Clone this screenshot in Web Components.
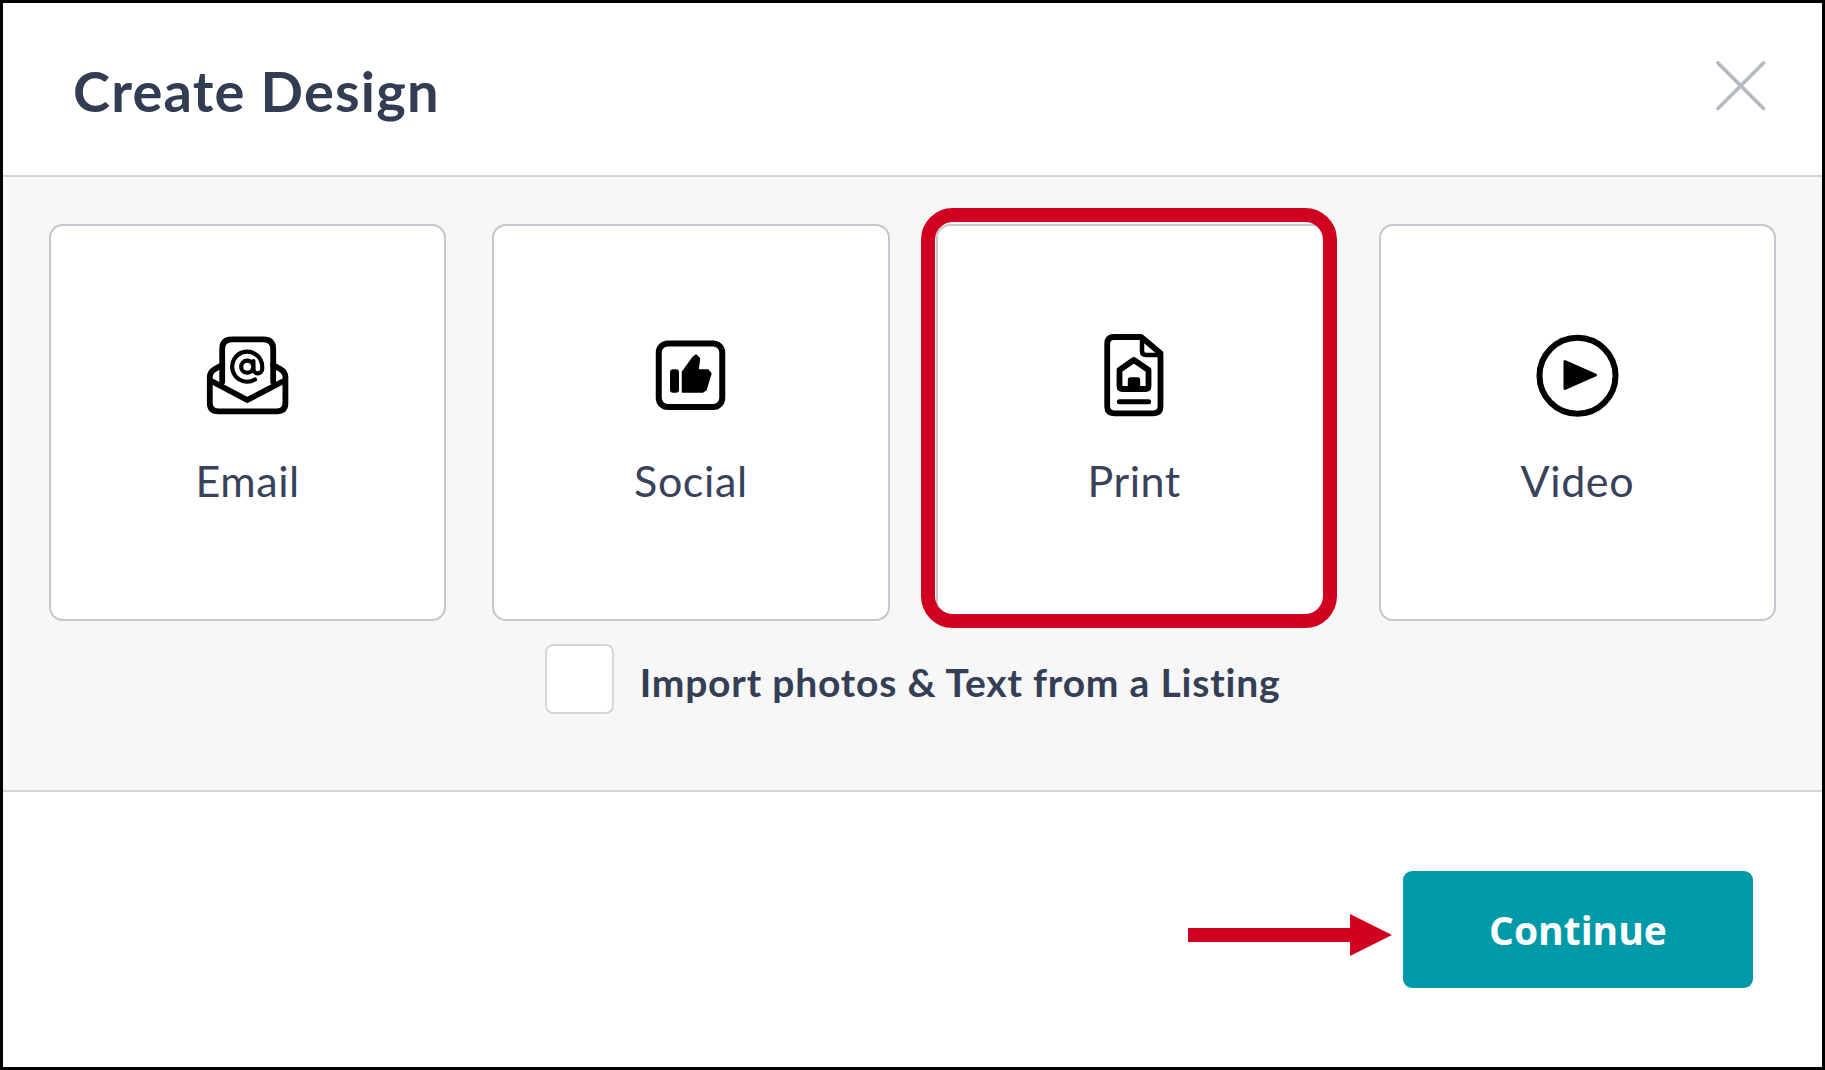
<!DOCTYPE html>
<html lang="en">
<head>
<meta charset="utf-8">
<title>Create Design</title>
<style>
  html, body { margin: 0; background: #fff; }
  body { font-family: Lato, "Open Sans", sans-serif; color: #2f3a50; }
</style>
</head>
<body>
<design-dialog>
  <span slot="title">Create Design</span>

  <design-card label="Email" slot="cards">
    <svg viewBox="0 0 96 96" fill="none" stroke="#000" stroke-width="5.800" stroke-linejoin="round" stroke-linecap="round">
      <path d="M22.200 54.700V22q0-9.700 9.700-9.700h31.600q9.700 0 9.700 9.700v32.700"/>
      <path d="M22.200 38L15 42q-5.200 3-5.200 8v26q0 8.300 8.300 8.300h59q8.300 0 8.300-8.300V50q0-5-5.200-8l-7.200-4"/>
      <path d="M12.800 54.700L47.200 73l35-18.300"/>
      <g stroke-width="4.200">
        <circle cx="47.200" cy="39.700" r="6"/>
        <path d="M53.400 34v8a4.400 4.400 0 0 0 8.800 0v-2.300A15 15 0 1 0 55 52.500"/>
      </g>
    </svg>
  </design-card>

  <design-card label="Social" slot="cards">
    <svg viewBox="0 0 96 96" fill="none" stroke="#000" stroke-width="6">
      <rect x="15.750" y="16.500" width="63.500" height="63.500" rx="9"/>
      <rect x="27" y="42.300" width="9" height="23.400" rx="3" fill="#000" stroke="none"/>
      <path fill="#000" stroke="#000" stroke-width="1.500" stroke-linejoin="round" d="M39.500 45L50.300 30l2.700-2 3.500 3.500-1.500 11.500h10l2.900 3.500-5 16.500-3 2H39.500z"/>
    </svg>
  </design-card>

  <design-card label="Print" slot="cards">
    <svg viewBox="0 0 96 96" fill="none" stroke="#000" stroke-width="5.800" stroke-linejoin="round" stroke-linecap="round">
      <path d="M55.200 10H28.200q-7 0-7 7v62.300q0 7 7 7h39.300q7 0 7-7V26.300z"/>
      <path d="M56 11v13q0 4 4 4h14" stroke-width="4.500"/>
      <path d="M47.800 33l14.700 10v16q0 3-3 3h-23q-3 0-3-3V43z"/>
      <path d="M41.800 62V53q0-2.700 2.700-2.700h7q2.700 0 2.700 2.700v9z" fill="#000" stroke="none"/>
      <path d="M33.400 74.700h29.200" stroke-width="5"/>
    </svg>
    <red-frame slot="overlay"></red-frame>
  </design-card>

  <design-card label="Video" slot="cards">
    <svg viewBox="0 0 96 96" fill="none" stroke="#000" stroke-width="6">
      <circle cx="48.500" cy="48.700" r="38"/>
      <path fill="#000" stroke="#000" stroke-width="3" stroke-linejoin="round" d="M36 34.500L66.500 48 36 61.500z"/>
    </svg>
  </design-card>

  <import-option slot="option">Import photos &amp; Text from a Listing</import-option>

  <red-arrow slot="footer"></red-arrow>
  <teal-button slot="footer">Continue</teal-button>
</design-dialog>

<script>
customElements.define('design-dialog',
  class extends HTMLElement {
    constructor () {
      super()
      this.attachShadow({ mode: 'open' }).innerHTML = `
        <style>
          :host { display: flex; flex-direction: column; box-sizing: border-box; height: 1070px; border: 3px solid #000; background: #fff; overflow: hidden; }
          header { display: flex; justify-content: space-between; align-items: flex-start; height: 174px; padding: 0 54px 0 70px; box-sizing: border-box; border-bottom: 2px solid #d3d5d9; }
          h1 { margin: 56px 0 0; font-size: 56px; line-height: 64px; font-weight: 700; letter-spacing: 1.2px; color: #323c52; }
          svg { width: 56px; height: 56px; margin-top: 55px; }
          main { background: #f7f7f7; height: 615px; box-sizing: border-box; padding: 47px 46px 0; border-bottom: 2px solid #d3d5d9; }
          .cards { display: grid; grid-template-columns: repeat(4, 1fr); gap: 46px; }
          .option { display: flex; justify-content: center; margin-top: 23px; }
          footer { flex: 1; display: flex; justify-content: flex-end; align-items: flex-start; gap: 11px; padding: 79px 69px 0 0; }
        </style>
        <header>
          <h1><slot name="title"></slot></h1>
          <svg viewBox="0 0 56 56" fill="none" stroke="#b5b9c1" stroke-width="3.800" stroke-linecap="round"><path d="M6 5l45.500 45.500M51.500 5L6 50.500"/></svg>
        </header>
        <main>
          <div class="cards"><slot name="cards"></slot></div>
          <div class="option"><slot name="option"></slot></div>
        </main>
        <footer><slot name="footer"></slot></footer>
      `
    }
  }
)

customElements.define('design-card',
  class extends HTMLElement {
    constructor () {
      super()
      this.attachShadow({ mode: 'open' }).innerHTML = `
        <style>
          :host { display: flex; flex-direction: column; align-items: center; position: relative; box-sizing: border-box; height: 397px; background: #fff; border: 2px solid #c4c7cd; border-radius: 14px; padding-top: 101px; }
          .icon { display: block; width: 96px; height: 96px; }
          ::slotted(svg) { display: block; width: 96px; height: 96px; }
          .label { margin-top: 34px; font-size: 43px; line-height: 48px; letter-spacing: 0.6px; color: #38425a; }
        </style>
        <div class="icon"><slot></slot></div>
        <div class="label"></div>
        <slot name="overlay"></slot>
      `
      this.shadowRoot.querySelector('.label').textContent = this.getAttribute('label')
    }
  }
)

customElements.define('red-frame',
  class extends HTMLElement {
    constructor () {
      super()
      this.attachShadow({ mode: 'open' }).innerHTML = `
        <style>
          :host { position: absolute; left: -17px; top: -18px; width: 416px; height: 420px; box-sizing: border-box; border: 14px solid #cf0020; border-radius: 32px; }
        </style>
      `
    }
  }
)

customElements.define('import-option',
  class extends HTMLElement {
    constructor () {
      super()
      this.attachShadow({ mode: 'open' }).innerHTML = `
        <style>
          :host { display: flex; align-items: center; gap: 26px; }
          .box { width: 69px; height: 70px; box-sizing: border-box; background: #fff; border: 2px solid #d5d7db; border-radius: 8px; }
          .text { margin-top: 6px; font-size: 39px; line-height: 46px; font-weight: 700; letter-spacing: 0.8px; color: #343e54; }
        </style>
        <span class="box"></span>
        <span class="text"><slot></slot></span>
      `
    }
  }
)

customElements.define('red-arrow',
  class extends HTMLElement {
    constructor () {
      super()
      this.attachShadow({ mode: 'open' }).innerHTML = `
        <style>
          :host { display: block; width: 204px; height: 42px; margin-top: 43px; }
          svg { display: block; }
        </style>
        <svg width="204" height="42" viewBox="0 0 204 42"><path fill="#cf0020" d="M0 14h162V0l42 21-42 21V28H0z"/></svg>
      `
    }
  }
)

customElements.define('teal-button',
  class extends HTMLElement {
    constructor () {
      super()
      this.attachShadow({ mode: 'open' }).innerHTML = `
        <style>
          :host { display: flex; justify-content: center; align-items: center; width: 350px; height: 117px; background: #0099a8; border-radius: 9px; color: #fff; font-family: "Open Sans", sans-serif; font-size: 39px; font-weight: 700; }
        </style>
        <slot></slot>
      `
    }
  }
)
</script>
</body>
</html>
